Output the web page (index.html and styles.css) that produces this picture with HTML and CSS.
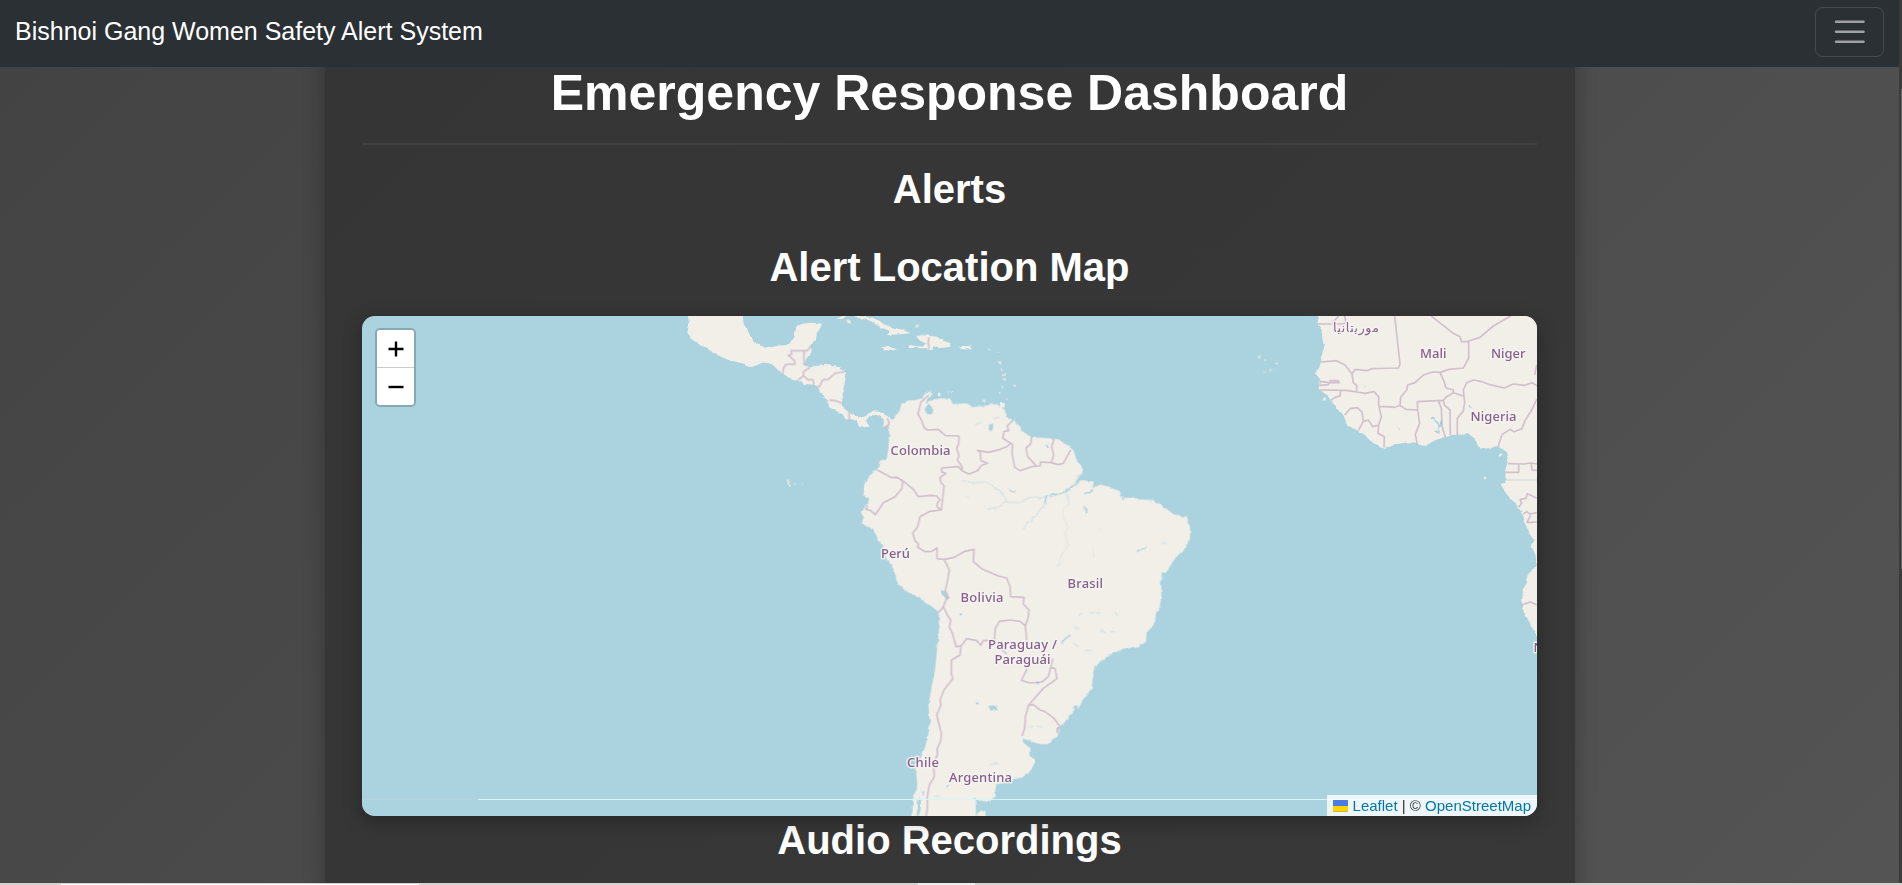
FILE: index.html
```html
<!DOCTYPE html>
<html lang="en">
<head>
<meta charset="utf-8">
<title>Emergency Response Dashboard</title>
<link rel="stylesheet" href="styles.css">
</head>
<body>
<div class="page">
  <nav class="navbar">
    <a class="brand">Bishnoi Gang Women Safety Alert System</a>
    <button class="toggler" aria-label="Toggle navigation">
      <svg viewBox="0 0 30 30" width="37.5" height="37.5"><path d="M4 7h22M4 15h22M4 23h22" stroke="#fff" stroke-opacity=".55" stroke-width="2" stroke-linecap="round" stroke-miterlimit="10"/></svg>
    </button>
  </nav>
  <main class="container">
    <h1 class="title">Emergency Response Dashboard</h1>
    <h2 class="heading">Alerts</h2>
    <h2 class="heading heading-map">Alert Location Map</h2>
    <div class="map">
      <svg class="tiles" viewBox="362 316 1175 500" width="1175" height="500">
        <defs>
          <filter id="coast" x="-5%" y="-5%" width="110%" height="110%" color-interpolation-filters="sRGB">
            <feTurbulence type="fractalNoise" baseFrequency=".16" numOctaves="2" seed="4" result="n"/>
            <feDisplacementMap in="SourceGraphic" in2="n" scale="3.5" xChannelSelector="R" yChannelSelector="G"/>
            <feGaussianBlur stdDeviation=".5"/>
          </filter>
        </defs>
        <g filter="url(#coast)">
          <!-- Mexico and Central America -->
          <g transform="translate(660 310) scale(.33333)">
            <path class="land" d="M80 0L88 40L82 68L98 90L125 108L145 115L160 130L205 150L240 158L278 171L310 157L335 162L352 178L370 195L390 208L412 212L435 222L462 224L478 238L492 262L505 272L508 292L528 302L550 315L557 328L590 333L600 347L622 354L626 344L616 334L628 318L645 313L662 320L672 336L670 350L680 354L695 330L682 318L660 306L638 303L618 318L598 324L580 312L560 302L545 285L547 272L548 245L556 210L558 184L540 172L500 165L465 168L450 172L432 166L440 145L455 122L452 105L468 90L470 70L483 50L480 40L450 38L425 42L408 52L404 80L388 104L350 108L320 115L290 102L275 85L262 60L250 40L248 0Z"/>
            <path class="land" d="M580 16L605 19L640 24L665 38L690 50L730 60L752 70L715 73L680 76L692 64L655 48L630 32L595 24ZM530 26L545 16L560 18L548 26ZM562 32L572 30L572 40L562 39ZM664 112L685 107L708 118L695 123L672 119ZM745 105L790 110L798 100L780 92L768 78L795 76L830 80L850 92L872 100L875 110L840 114L822 112L810 124L800 115L750 114ZM835 250L843 247L844 259L837 258Z"/>
            <path class="land islets" d="M762 48L775 42L778 48L766 54ZM379 510L390 508L394 518L388 522L398 529L387 531ZM402 518L411 522L405 525ZM424 524L431 526L426 529Z"/>
          </g>
          <!-- Lesser Antilles -->
          <g class="land" transform="translate(830 310) scale(.33333)">
            <path d="M392 108L424 109L424 118L392 118Z"/>
            <g class="islets"><circle cx="478" cy="116" r="3"/><circle cx="505" cy="128" r="3"/><circle cx="510" cy="158" r="6"/><circle cx="516" cy="177" r="4"/><circle cx="523" cy="194" r="5"/><circle cx="524" cy="210" r="4"/><circle cx="517" cy="230" r="3"/><circle cx="509" cy="249" r="3"/><circle cx="554" cy="227" r="4"/><circle cx="530" cy="267" r="3"/><circle cx="353" cy="247" r="3"/><circle cx="367" cy="246" r="3"/><circle cx="460" cy="273" r="5"/></g>
            <path d="M511 279H524V292H510Z"/>
          </g>
          <!-- South America -->
          <g transform="translate(840 380) scale(.33333)">
            <path class="land" d="M143 118L160 118L175 100L185 72L205 62L225 60L245 55L258 38L272 34L275 42L262 52L258 72L272 62L300 55L330 55L338 72L380 70L400 82L440 76L470 72L495 90L497 110L520 120L545 145L548 155L575 172L640 175L665 182L700 210L712 245L730 265L725 280L705 305L722 300L762 305L757 326L775 312L800 318L840 335L848 358L870 350L900 358L940 360L965 375L1000 402L1020 408L1040 408L1050 440L1050 475L1035 505L1005 535L980 575L965 575L963 600L964 640L960 680L948 700L945 725L920 760L918 785L895 802L850 806L820 820L785 840L762 865L757 905L755 925L735 950L715 985L690 1010L665 1042L650 1070L625 1093L600 1092L570 1084L548 1075L550 1088L572 1105L570 1130L585 1145L570 1178L545 1192L515 1200L470 1210L465 1230L467 1250L445 1265L420 1262L403 1253L407 1270L408 1320L212 1320L218 1290L218 1260L232 1220L228 1170L245 1130L262 1080L270 1030L265 975L275 920L285 870L292 800L300 720L295 695L270 675L230 650L190 630L168 600L168 580L150 550L138 535L125 495L100 450L65 430L70 415L62 395L78 375L90 355L70 345L75 315L90 285L115 268L118 245L140 235L145 210L148 150Z"/>
            <path class="land" d="M412 1296L422 1292L436 1294L438 1320H412Z"/>
            <path class="lake" d="M258 80L267 70L280 90L275 104L266 106L257 96ZM447 134L460 131L459 144L452 154L447 150ZM302 630L318 633L328 654L322 659L303 641ZM445 979L467 975L469 992L452 990ZM505 325L526 332L525 340L512 333ZM730 378L742 386L741 402L734 396ZM616 192L624 192L623 202L617 202ZM358 700L367 701L366 708L360 706ZM409 966L415 967L415 974L410 973ZM700 978L714 976L710 994L690 1014L684 1010L699 996ZM665 1032L672 1030L662 1050L652 1055ZM235 1255L244 1260L240 1300L228 1310L232 1290ZM247 1234L253 1236L252 1242L247 1241ZM318 1220L330 1210L322 1222ZM586 906L602 907L588 914Z"/>
            <path class="river" d="M630 348L680 334L730 290M620 346L614 372M735 340L760 330M890 515L902 507L922 502M665 790L682 770L690 766" />
            <path class="river thin" d="M365 302L400 308L435 306L465 322L486 340L502 366L535 368L570 352L600 352L628 346M502 366L475 382L440 388M614 374L590 404L562 428L550 448M680 340L688 372M405 134L425 126M462 115L480 110M966 488L978 492M718 705L730 700M750 698L785 699M700 742L718 746M780 750L795 758M810 755L825 755M700 790L715 800M735 811L755 812M825 695L832 710M592 1040L605 1036M450 1155L472 1146M285 1252L300 1246M570 1042L580 1038"/>
            <path class="river faint" d="M688 372L672 382L668 405L678 430L685 440L674 460L684 496L660 532L655 560M762 505V530M780 445V455M375 350L388 353"/>
          </g>
          <!-- Africa -->
          <g transform="translate(1240 310) scale(.33333)">
            <path class="land" d="M240 0L232 42L245 60L247 85L252 110L242 155L238 172L225 192L240 207L236 240L262 255L270 272L285 285L312 318L322 348L350 360L375 378L400 400L433 416L470 402L510 397L552 407L600 385L640 375L690 373L702 382L722 416L745 415L775 410L800 425L806 445L796 480L796 518L783 528L802 555L830 585L848 612L860 655L880 690L873 706L889 745L886 770L865 792L848 850L845 895L862 925L885 970L900 1000V0Z"/>
            <path class="land" d="M776 436L783 428L784 437L777 441ZM732 500L739 501L738 508L733 508ZM248 262L258 264L257 272L249 270Z"/>
            <g class="land islets"><circle cx="58" cy="141" r="5"/><circle cx="76" cy="151" r="3"/><circle cx="108" cy="161" r="4"/><circle cx="105" cy="150" r="2"/><circle cx="91" cy="183" r="4"/><circle cx="73" cy="188" r="3"/><circle cx="101" cy="180" r="2"/></g>
            <path class="river" d="M574 324L595 340L598 352L596 368M585 362L598 370M603 332L600 352M689 284L693 290"/>
            <path class="river thin" d="M372 228L378 228M472 350L478 358M440 375L447 372M732 299L740 297"/>
          </g>
        </g>
        <g class="borders">
          <g transform="translate(660 310) scale(.33333)">
            <path d="M368 195L370 175L378 163L405 162L404 152L390 140L384 136L395 133L393 122L432 122V166M432 122L442 122L455 106M412 212L430 197L430 185L450 172M430 197L445 210L458 208L462 224M470 230H478L488 210L505 208L525 190L558 184M508 270L530 273L547 280M567 304L568 332M682 324L688 342L674 352M807 82L804 100L808 116"/>
          </g>
          <g transform="translate(840 380) scale(.33333)">
            <path d="M266 45L242 68L234 102L245 122L252 142L262 150L295 148L316 167L357 168L356 190L350 205L357 228L352 240L365 258L368 274L388 282L412 272L425 256L443 250L423 242L420 215L412 211L445 217L480 208L500 200L513 190L505 186L488 174L492 155L506 152L502 138L518 121M368 274L355 260L305 264V276L318 280L300 292L302 306L312 318L304 390L290 380L292 370L300 360L290 348L272 346L235 350L220 328L188 302L170 292L155 293L112 270M188 302L186 325L165 350L130 368L106 404L92 392L79 388L82 375M304 390L270 394L240 410L233 440L218 460L225 482L235 492L233 502L255 515L275 514L291 504V536L312 538L340 533L375 514L402 508L400 545L425 566L475 588L500 594L510 620L512 650L552 652L550 672L567 690L564 715L556 738L540 724L510 720L478 724L466 745L463 780L430 782L422 796L410 782L380 776L363 798L348 800L338 762L328 742L332 720L322 705L310 680L316 664L325 650L316 632L322 605L328 570L312 538M310 680L295 698M363 798L360 825L335 840L334 880L338 896L312 930L300 960L303 975L290 1005L304 1060L303 1080L292 1105L292 1125L280 1150L283 1190L268 1215L262 1250L262 1285L256 1320M556 738L560 782M478 802L500 822M562 865L544 901L570 909L605 906L625 890L632 862L638 835M632 862L645 866L651 896L610 925L566 975L556 1010L554 1045L546 1068M566 975L580 974L600 990L615 995L642 1015L660 1040L651 1046L653 1060M518 190L516 220L524 262L540 272L575 260L600 258L602 246L632 248L655 254L670 250L692 210M575 172L572 192L558 204L562 228L590 260M642 178L635 200L641 225L634 248"/>
          </g>
          <g transform="translate(1240 310) scale(.33333)">
            <path d="M232 42H275M278 38L296 18M314 18L318 38L306 42H278M464 18L480 162L476 174L395 176L380 182L345 178L336 192L315 165L290 152L243 156M336 192L340 218L350 226V246L320 241L238 240M238 226L265 224L268 218L240 214M268 218L298 218L294 212L268 212M272 272L285 262L300 258L302 241M350 246L375 250L402 245L416 260L416 285L424 320L416 345L398 350L385 330L370 334L355 362M370 334L366 306L352 293L330 296L314 315M416 345L414 370L433 380L432 412M418 290L440 290L465 292L480 286L482 262L500 240L503 225L525 218L550 195L578 186L600 187L628 178L670 174L686 145V95L664 95L660 80L640 70L574 18M686 93L720 82L760 48L812 18M480 286L498 298L533 300L532 275L610 271L620 260L640 248L670 258M600 187L612 214L618 234L640 240L640 248M533 300L539 340L526 374L532 404M596 275L604 295L606 348L616 382M610 271L614 286L630 300L631 376M652 376V325L670 303L674 276L670 240L680 218L700 210L722 214L750 224L792 234L820 222L855 226L876 218L892 228M890 165L884 195M890 268L875 300L855 332L846 356L822 365L810 358L786 374L774 410M804 461L852 462L874 459L890 462M836 463V487H796M874 462L876 480L890 481M890 564L862 551L858 565L840 568L845 580L836 592M850 612L860 605L870 612L890 608M860 638L872 616M860 638L890 636M845 885L870 876L890 884"/>
          </g>
        </g>
        <g class="seams">
          <path d="M362 480H478M362 799.5H478M1438 480H1537" stroke="#b7d5d9" stroke-opacity=".8"/>
          <path d="M478 799.5H1537" stroke="#d6f6fa"/>
        </g>
        <g class="labels">
          <text x="890.500" y="455" textLength="60">Colombia</text>
          <text x="881" y="557.5" textLength="29">Perú</text>
          <text x="1067.500" y="587.5" textLength="35.500">Brasil</text>
          <text x="960.500" y="602" textLength="43">Bolivia</text>
          <text x="988" y="649" textLength="69">Paraguay /</text>
          <text x="994.500" y="664" textLength="56">Paraguái</text>
          <text x="907" y="767" textLength="32">Chile</text>
          <text x="949" y="782" textLength="63">Argentina</text>
          <text x="1420" y="357.500" textLength="26.500">Mali</text>
          <text x="1491" y="357.500" textLength="34.500">Niger</text>
          <text x="1470.500" y="421" textLength="46">Nigeria</text>
          <text x="1333" y="332" textLength="46" class="arabic">موريتانيا</text>
          <text x="1533.500" y="652">N</text>
        </g>
      </svg>
      <div class="zoom">
        <a class="zoom-btn"><svg viewBox="0 0 16 16" width="16" height="16"><path d="M.5 8h15M8 .5v15" stroke="#000" stroke-width="2.4"/></svg></a>
        <a class="zoom-btn"><svg viewBox="0 0 16 16" width="16" height="16"><path d="M.5 8h15" stroke="#000" stroke-width="2.4"/></svg></a>
      </div>
      <div class="attribution">
        <svg class="flag" viewBox="0 0 12 8" width="15" height="12" preserveAspectRatio="none"><path fill="#4c7be1" d="M0 0h12v4H0z"/><path fill="#ffd500" d="M0 4h12v3H0z"/><path fill="#e0bc00" d="M0 7h12v1H0z"/></svg>
        <span><a>Leaflet</a> | © <a>OpenStreetMap</a></span>
      </div>
    </div>
    <h2 class="heading">Audio Recordings</h2>
  </main>
</div>
<div class="scrollbar"><div class="thumb"></div></div>
<footer class="taskbar"><i class="task-wide"></i><i class="task-small"></i></footer>
</body>
</html>
```
FILE: styles.css
```css
* { box-sizing: border-box; }
body {
  margin: 0;
  width: 1902px;
  height: 885px;
  overflow: hidden;
  display: grid;
  grid-template: 883px 2px / 1899px 3px;
  font-family: Arial, "Liberation Sans", sans-serif;
  color: #fff;
}
.page {
  position: relative;
  overflow: hidden;
  padding-top: 23px;
  background: linear-gradient(135deg, #434343, #545454);
}
.navbar {
  position: absolute;
  inset: 0 0 auto;
  z-index: 5;
  height: 67px;
  padding: 0 15px;
  display: flex;
  align-items: center;
  justify-content: space-between;
  background: #2b3035;
}
.brand { font-size: 25px; line-height: 37px; margin-top: -4px; }
.toggler {
  display: flex;
  padding: 5px 15px;
  margin-top: -3px;
  border: 1px solid rgba(255, 255, 255, .13);
  border-radius: 7.5px;
  background: none;
}
.toggler path { fill: none; }
.container {
  width: 1250px;
  height: 900px;
  margin: 0 auto;
  padding: 40px 37.5px 0;
  text-align: center;
  background: linear-gradient(135deg, #353535, #383838);
  box-shadow: 0 0 20px rgba(0, 0, 0, .28);
}
.title {
  margin: 0 0 20px;
  padding-bottom: 20px;
  border-bottom: 2px solid #414141;
  font-size: 50px;
  line-height: 60px;
}
.heading { margin: 0; font-size: 40px; line-height: 48px; }
.heading-map { margin: 30px 0 25px; }
.map {
  position: relative;
  height: 500px;
  border-radius: 12.5px;
  overflow: hidden;
  background: #aad3df;
  box-shadow: 0 5px 19px rgba(0, 0, 0, .3);
}
.tiles { display: block; }
.land { fill: #f2efe9; }
.islets { opacity: .6; }
.lake { fill: #aad3df; }
.river { fill: none; stroke: #aad3df; stroke-width: 5; }
.thin { stroke-width: 4; stroke-opacity: .4; }
.faint { stroke-width: 4; stroke-opacity: .2; }
.borders path {
  fill: none;
  stroke: #b79ab6;
  stroke-opacity: .55;
  stroke-width: 5;
  stroke-linejoin: round;
}
.seams path { fill: none; stroke-width: 1; }
.labels text {
  font: 500 13px "Noto Sans", sans-serif;
  fill: #85608a;
  stroke: #f6f3f1;
  stroke-width: 3px;
  stroke-opacity: .85;
  stroke-linejoin: round;
  paint-order: stroke;
}
.labels .arabic { font-family: "DejaVu Sans", sans-serif; font-size: 12.5px; }
.zoom {
  position: absolute;
  top: 12px;
  left: 13px;
  width: 41px;
  border: 2px solid rgba(0, 0, 0, .2);
  border-radius: 5px;
  background-clip: padding-box;
}
.zoom-btn {
  display: flex;
  align-items: center;
  justify-content: center;
  height: 37px;
  padding-top: 1px;
  background: #fff;
}
.zoom-btn:first-child { height: 38px; border-bottom: 1px solid #ccc; border-radius: 3px 3px 0 0; }
.zoom-btn:last-child { border-radius: 0 0 3px 3px; }
.attribution {
  position: absolute;
  right: 0;
  bottom: 0;
  width: 210px;
  height: 21px;
  padding: 0 6px;
  display: flex;
  align-items: center;
  justify-content: space-between;
  background: rgba(255, 255, 255, .8);
  color: #333;
  font-size: 15px;
  line-height: 21px;
  white-space: nowrap;
}
.attribution a { color: #0078a8; }
.scrollbar { background: #3b3b3b; padding: 89px 0 0 2px; }
.thumb { height: 480px; background: #686868; }
.taskbar { grid-column: 1 / 3; display: flex; gap: 499px; padding-left: 61px; background: #d6d3d3; }
.task-wide { width: 358px; margin-top: 1px; background: #fff; }
.task-small { width: 57px; background: #eee; }
```
